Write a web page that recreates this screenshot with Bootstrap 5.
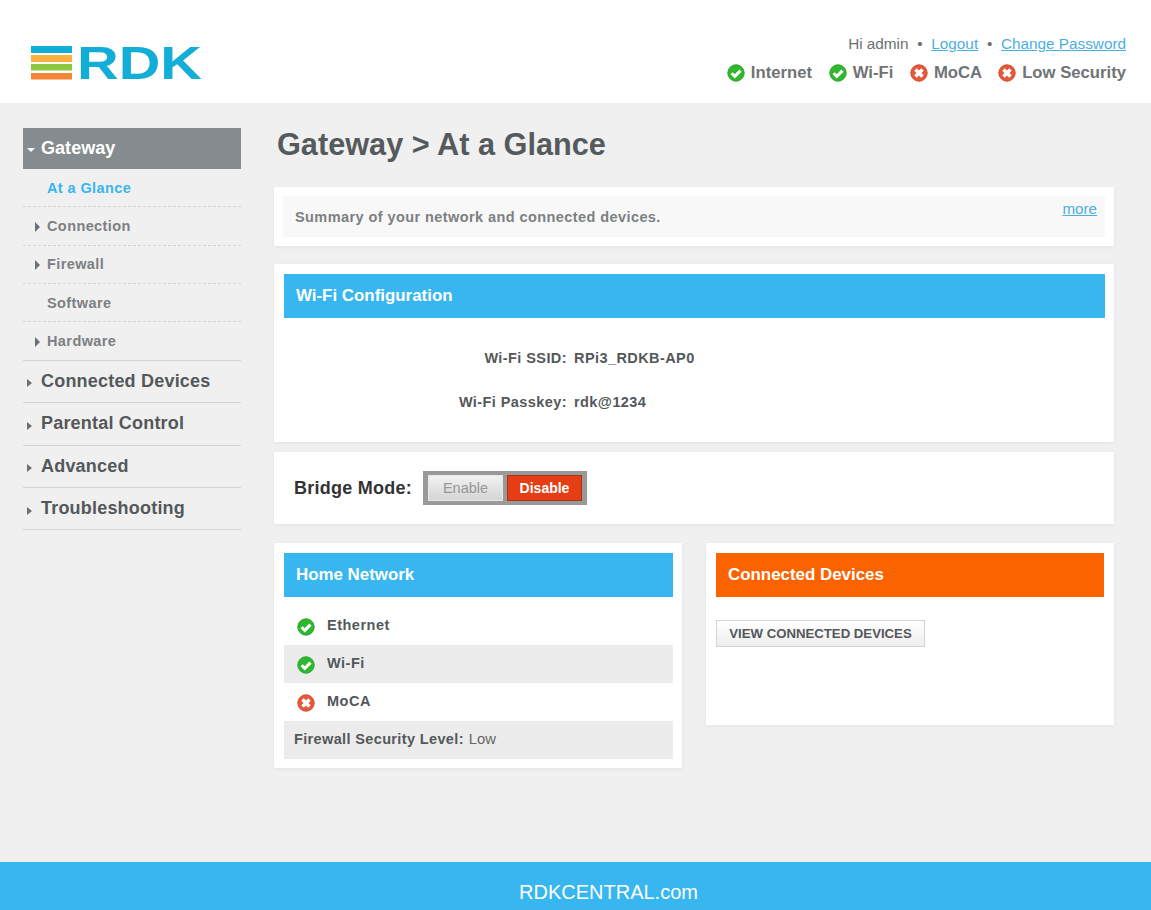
<!DOCTYPE html>
<html lang="en">
<head>
  <meta charset="UTF-8" />
  <meta name="viewport" content="width=device-width, initial-scale=1" />
  <title>Gateway - At a Glance</title>
  <link href="https://cdn.jsdelivr.net/npm/bootstrap@5.3.0/dist/css/bootstrap.min.css" rel="stylesheet" />
  <style>
    html, body { height: 910px; overflow: hidden; }
    body {
      background-color: #f0f0f0;
      font-family: "Liberation Sans", Arial, sans-serif;
      color: #555a5c;
    }
    a { color: #4cafdf; }
    .top-head { height: 103px; padding: 0 25px 0 31px; background: #fff; }
    .logo-svg { width: 176px; height: 62px; margin-top: 36px; display: block; }
    .user-line { font-size: 15.3px; color: #6b6f71; padding-top: 33px; line-height: 21px; }
    .user-line .dot { margin: 0 4.5px; }
    .status-line { font-size: 16.7px; font-weight: 700; color: #6f7375; margin-top: 8px; line-height: 22px; }
    .status-line span { margin-left: 12px; }
    .st-icon { width: 18px; height: 18px; flex: none; }
    .status-line .st-icon { margin-right: 6px; vertical-align: -4px; }

    .page-wrap { height: 759px; }
    .side-menu { width: 218px; margin: 25px 33px 0 23px; flex: none; }
    .menu-head { height: 41px; background: #858b8e; color: #fff; font-size: 18px; font-weight: 700; padding-left: 4px; letter-spacing: .05px; }
    .sub-item { height: 38.3px; border-bottom: 1px dashed #d4d4d4; font-size: 14.5px; font-weight: 700; color: #7c8082; padding: 2px 0 0 24px; letter-spacing: .4px; position: relative; }
    .sub-item.on { color: #38b6f0; }
    .sub-item.last { height: 38.6px; border-bottom: 1px solid #d4d4d4; }
    .main-item { height: 42.4px; border-bottom: 1px solid #d4d4d4; font-size: 18px; font-weight: 700; color: #54585a; padding-left: 18px; letter-spacing: .2px; position: relative; }
    .tri { position: absolute; top: 50%; width: 0; height: 0; border-style: solid; border-color: transparent transparent transparent #6c7072; border-width: 5px 0 5px 5px; margin-top: -4px; }
    .sub-item .tri { left: 12px; }
    .main-item .tri { left: 4px; border-width: 4px 0 4px 5px; margin-top: -2px; }
    .tri-down { width: 0; height: 0; border-style: solid; border-color: #fff transparent transparent transparent; border-width: 4px 4px 0 4px; margin-right: 6px; margin-top: 2px; }

    .main-col { width: 840px; flex: none; }
    .page-title { font-size: 30.7px; font-weight: 700; color: #555a5c; margin: 23px 0 0 3px; line-height: 38px; height: 61px; }
    .white-box { background: #fff; box-shadow: 0 1px 4px rgba(0,0,0,.06); }
    .summary-box { height: 59px; padding: 9px; margin-bottom: 18px; }
    .summary-in { height: 41px; background: #f8f8f8; padding: 2px 8px 0 12px; font-size: 14.5px; font-weight: 700; color: #7c8082; letter-spacing: .42px; }
    .summary-in a { font-weight: 400; font-size: 15.2px; margin-top: -16px; letter-spacing: 0; }
    .band { height: 44px; color: #fff; font-size: 16.9px; font-weight: 700; padding: 0 0 1px 12px; }
    .band-blue { background: #38b6f0; }
    .band-orange { background: #fb6200; }
    .wifi-box { height: 178px; padding: 10px 9px 0 10px; margin-bottom: 10px; }
    .kv-row { font-size: 14.5px; font-weight: 700; color: #54585a; height: 44px; letter-spacing: .42px; }
    .kv-row b { width: 283px; text-align: right; margin-right: 7px; }
    .kv-list { padding-top: 19px; }
    .bridge-box { height: 72px; padding-left: 20px; margin-bottom: 19px; }
    .bridge-label { font-size: 18px; font-weight: 700; color: #333; margin-right: 11px; letter-spacing: .25px; }
    .toggle-wrap { background: #999; padding: 4px 5px; gap: 4px; height: 34px; }
    .tog { width: 75px; font-size: 14.5px; border: 1px solid; padding-top: 1px; }
    .tog-off { background: linear-gradient(#f2f2f2, #d4d4d4); color: #969696; border-color: #e6e6e6; }
    .tog-on { background: #e63e14; color: #fff; font-weight: 700; border-color: #a93517; font-size: 14px; }
    .half-left { width: 408px; height: 225px; padding: 10px 9px 0 10px; }
    .half-right { width: 408px; height: 182px; padding: 10px 10px 0 10px; margin-left: 24px; }
    .net-list { margin-top: 10px; }
    .net-row { height: 38px; font-size: 14.5px; font-weight: 700; color: #54585a; padding-left: 13px; letter-spacing: .5px; }
    .net-row .st-icon { margin-right: 12px; margin-top: 1px; }
    .net-row span { margin-top: -1px; }
    .net-row.grey { background: #ececec; }
    .fw-row { padding-left: 10px; letter-spacing: .36px; }
    .fw-row em { font-style: normal; font-weight: 400; font-size: 14.8px; color: #666; letter-spacing: 0; margin: -1px 0 0 5px; }
    .view-btn {
      margin-top: 23px; height: 27px; width: 209px; border: 1px solid #d3d3d3; border-radius: 0; padding: 0;
      background: linear-gradient(#fff, #eee); color: #54585a; font-size: 13.2px; font-weight: 700;
    }
    .foot-bar { height: 48px; background: #38b6f0; color: #fff; font-size: 20px; padding: 11px 0 0 66px; }
  </style>
</head>
<body>

  <!-- Header -->
  <header class="top-head d-flex justify-content-between">
    <svg class="logo-svg" viewBox="0 -10 176 62">
      <rect x="0" y="0" width="41" height="7" fill="#12aed8" />
      <rect x="0" y="9" width="41" height="7" fill="#fbb040" />
      <rect x="0" y="18" width="41" height="6.500" fill="#8dc63f" />
      <rect x="0" y="27" width="41" height="6.500" fill="#f58634" />
      <text x="46" y="33" font-family="Liberation Sans" font-weight="700" font-size="46" fill="#12aed8" textLength="125" lengthAdjust="spacingAndGlyphs">RDK</text>
    </svg>
    <div class="text-end">
      <div class="user-line">Hi admin <span class="dot">•</span> <a href="#">Logout</a> <span class="dot">•</span> <a href="#">Change Password</a></div>
      <div class="status-line">
        <span><svg class="st-icon"><use href="#ok" /></svg>Internet</span>
        <span><svg class="st-icon"><use href="#ok" /></svg>Wi-Fi</span>
        <span><svg class="st-icon"><use href="#bad" /></svg>MoCA</span>
        <span><svg class="st-icon"><use href="#bad" /></svg>Low Security</span>
      </div>
    </div>
  </header>

  <!-- icon defs -->
  <svg width="0" height="0" class="position-absolute">
    <symbol id="ok" viewBox="0 0 18 18">
      <circle cx="9" cy="9" r="8.200" fill="#2fb82f" stroke="#27a527" stroke-width="1" />
      <path d="M4.600 9.200 L7.800 12.400 L13.500 6.600" fill="none" stroke="#fff" stroke-width="3" />
    </symbol>
    <symbol id="bad" viewBox="0 0 18 18">
      <circle cx="9" cy="9" r="8.200" fill="#e4573a" stroke="#d84a2a" stroke-width="1" />
      <path d="M5.500 5.500 L12.500 12.500 M12.500 5.500 L5.500 12.500" fill="none" stroke="#fff" stroke-width="3.600" />
    </symbol>
  </svg>

  <div class="page-wrap d-flex">
    <!-- Sidebar -->
    <nav class="side-menu">
      <div class="menu-head d-flex align-items-center"><i class="tri-down"></i>Gateway</div>
      <div class="sub-item on d-flex align-items-center">At a Glance</div>
      <div class="sub-item d-flex align-items-center"><i class="tri"></i>Connection</div>
      <div class="sub-item d-flex align-items-center"><i class="tri"></i>Firewall</div>
      <div class="sub-item d-flex align-items-center">Software</div>
      <div class="sub-item last d-flex align-items-center"><i class="tri"></i>Hardware</div>
      <div class="main-item d-flex align-items-center"><i class="tri"></i>Connected Devices</div>
      <div class="main-item d-flex align-items-center"><i class="tri"></i>Parental Control</div>
      <div class="main-item d-flex align-items-center"><i class="tri"></i>Advanced</div>
      <div class="main-item d-flex align-items-center"><i class="tri"></i>Troubleshooting</div>
    </nav>

    <!-- Main content -->
    <main class="main-col">
      <h1 class="page-title">Gateway &gt; At a Glance</h1>

      <div class="white-box summary-box">
        <div class="summary-in d-flex align-items-center justify-content-between">
          Summary of your network and connected devices.
          <a href="#">more</a>
        </div>
      </div>

      <div class="white-box wifi-box">
        <div class="band band-blue d-flex align-items-center">Wi-Fi Configuration</div>
        <div class="kv-list">
          <div class="kv-row d-flex align-items-center"><b>Wi-Fi SSID:</b> RPi3_RDKB-AP0</div>
          <div class="kv-row d-flex align-items-center"><b>Wi-Fi Passkey:</b> rdk@1234</div>
        </div>
      </div>

      <div class="white-box bridge-box d-flex align-items-center">
        <span class="bridge-label">Bridge Mode:</span>
        <div class="toggle-wrap d-flex">
          <div class="tog tog-off d-flex align-items-center justify-content-center">Enable</div>
          <div class="tog tog-on d-flex align-items-center justify-content-center">Disable</div>
        </div>
      </div>

      <div class="d-flex align-items-start">
        <div class="white-box half-left">
          <div class="band band-blue d-flex align-items-center">Home Network</div>
          <div class="net-list">
            <div class="net-row d-flex align-items-center"><svg class="st-icon"><use href="#ok" /></svg><span>Ethernet</span></div>
            <div class="net-row grey d-flex align-items-center"><svg class="st-icon"><use href="#ok" /></svg><span>Wi-Fi</span></div>
            <div class="net-row d-flex align-items-center"><svg class="st-icon"><use href="#bad" /></svg><span>MoCA</span></div>
            <div class="net-row grey fw-row d-flex align-items-center">Firewall Security Level: <em>Low</em></div>
          </div>
        </div>
        <div class="white-box half-right">
          <div class="band band-orange d-flex align-items-center">Connected Devices</div>
          <button class="btn view-btn">VIEW CONNECTED DEVICES</button>
        </div>
      </div>
    </main>
  </div>

  <footer class="foot-bar d-flex align-items-center justify-content-center">RDKCENTRAL.com</footer>

  <script src="https://cdn.jsdelivr.net/npm/bootstrap@5.3.0/dist/js/bootstrap.bundle.min.js"></script>
</body>
</html>
